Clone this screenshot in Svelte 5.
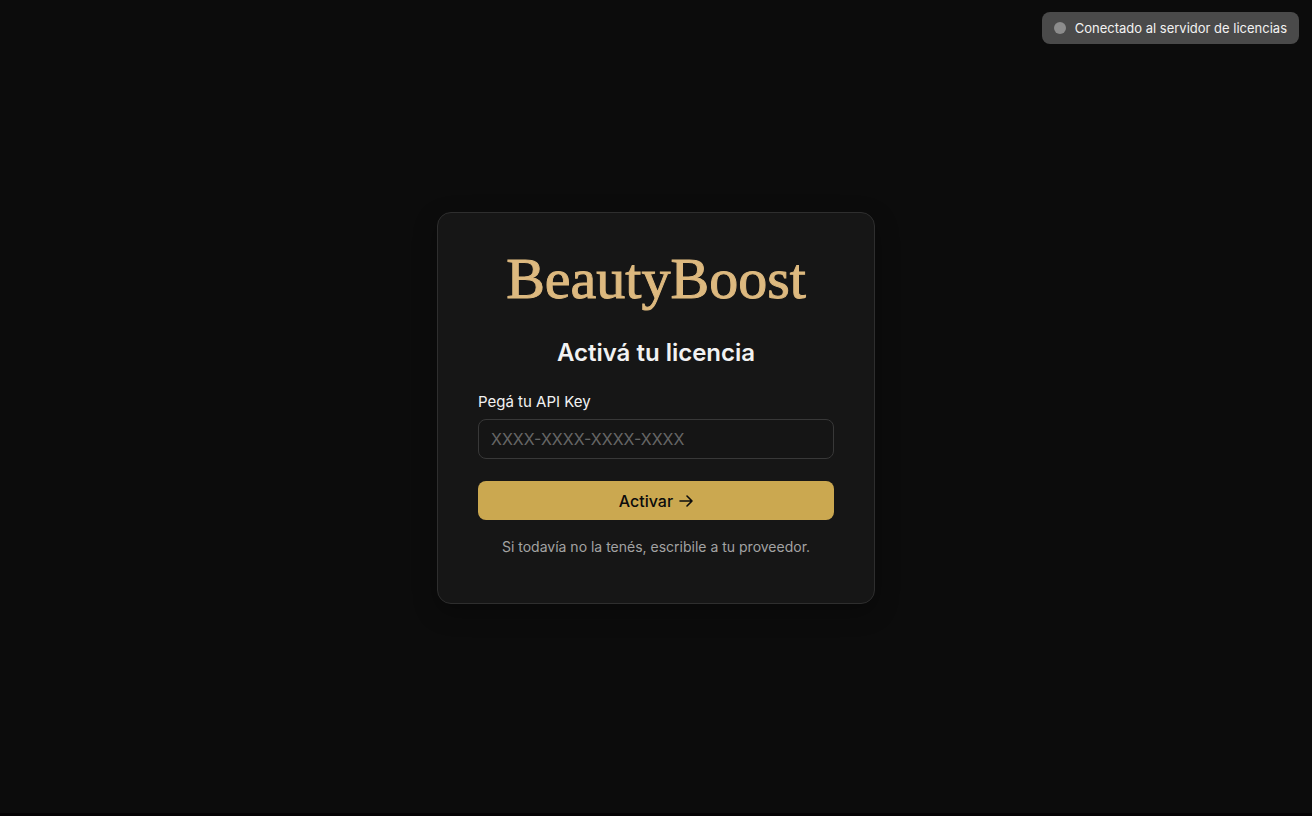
<script>
  let apiKey = $state('');
</script>

<div class="page">
  <div class="status" role="status">
    <span class="dot"></span>
    <span>Conectado al servidor de licencias</span>
  </div>
  <main>
    <form class="card" onsubmit={(e) => e.preventDefault()}>
      <div class="brand">BeautyBoost</div>
      <h1>Activá tu licencia</h1>
      <label for="api-key">Pegá tu API Key</label>
      <input id="api-key" type="text" placeholder="XXXX-XXXX-XXXX-XXXX" bind:value={apiKey} />
      <button type="submit">
        <span>Activar</span>
        <svg viewBox="0 0 14 14" aria-hidden="true">
          <path d="M1 7h12M8 2l5 5-5 5" />
        </svg>
      </button>
      <p>Si todavía no la tenés, escribile a tu proveedor.</p>
    </form>
  </main>
</div>

<style>
  :global(body) {
    margin: 0;
    background: #0c0c0c;
  }
  .page {
    box-sizing: border-box;
    min-height: 100vh;
    display: flex;
    box-shadow: inset 0 -3px #050304;
    color: #f2f2f2;
    font-family: Inter, "Liberation Sans", sans-serif;
  }
  .status {
    position: absolute;
    top: 12px;
    right: 13px;
    display: flex;
    align-items: center;
    gap: 9px;
    box-sizing: border-box;
    height: 32px;
    padding: 0 12px;
    border-radius: 8px;
    background: #4a4a4a;
    font-size: 13px;
  }
  .dot {
    width: 12px;
    height: 12px;
    border-radius: 50%;
    background: #8c8c8c;
  }
  main {
    flex: 1;
    display: flex;
    align-items: center;
    justify-content: center;
  }
  .card {
    box-sizing: border-box;
    width: 100%;
    max-width: 438px;
    padding: 32px 40px 46px;
    display: flex;
    flex-direction: column;
    border: 1px solid #2e2e2e;
    border-radius: 14px;
    background: #161616;
    box-shadow: 0 8px 24px rgba(0, 0, 0, 0.3);
  }
  .brand {
    color: #ddb97f;
    font: 58px/68px "Liberation Serif", serif;
    -webkit-text-stroke: 1px #ddb97f;
    text-align: center;
  }
  h1 {
    margin: 24px 0;
    font-size: 24px;
    line-height: 32px;
    font-weight: 600;
    text-align: center;
  }
  label {
    margin-bottom: 8px;
    font-size: 15px;
    line-height: 18px;
  }
  input {
    box-sizing: border-box;
    width: 100%;
    height: 40px;
    padding: 0 12px;
    border: 1px solid #383838;
    border-radius: 8px;
    background: #151515;
    color: #f2f2f2;
    font: inherit;
    font-size: 16px;
  }
  input::placeholder {
    color: #666;
    opacity: 1;
  }
  button {
    display: flex;
    align-items: center;
    justify-content: center;
    gap: 6px;
    height: 39px;
    margin: 22px 0 17px;
    padding: 0;
    border: 0;
    border-radius: 8px;
    background: #cba850;
    color: #0c0c0c;
    font: inherit;
    font-size: 16px;
    font-weight: 500;
  }
  svg {
    width: 14px;
    height: 14px;
    fill: none;
    stroke: currentColor;
    stroke-width: 1.6;
    stroke-linecap: round;
    stroke-linejoin: round;
  }
  p {
    margin: 0;
    color: #a3a3a3;
    font-size: 14px;
    line-height: 20px;
    text-align: center;
  }
</style>
